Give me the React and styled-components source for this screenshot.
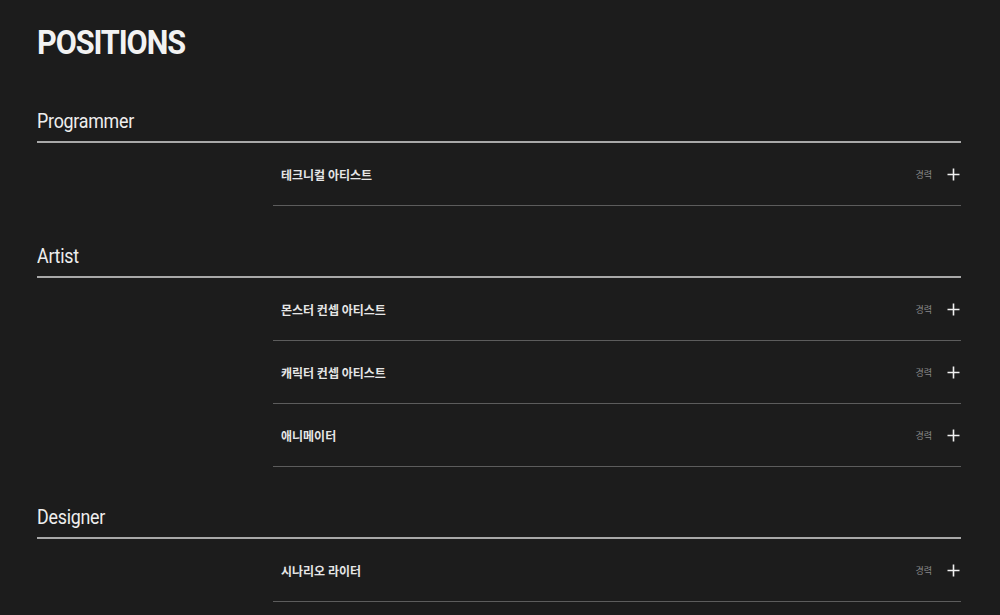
import React from "react";
import styled, { createGlobalStyle } from "styled-components";

const GlobalStyle = createGlobalStyle`
  html, body {
    margin: 0;
    padding: 0;
    background: #1c1c1c;
  }
  body {
    font-family: Roboto, "Noto Sans CJK KR", sans-serif;
    color: #f0f0f0;
  }
`;

const Page = styled.div`
  padding: 23px 39px 40px 37px;
`;

const Title = styled.h1`
  margin: 0 0 47px;
  font-size: 34px;
  font-weight: 700;
  letter-spacing: -1.2px;
  line-height: 38px;
  color: #f2f2f2;
  transform: scaleX(0.9);
  transform-origin: left center;
`;

const Section = styled.section`
  margin-bottom: 37px;
`;

const SectionHead = styled.h2`
  margin: 0;
  padding-bottom: 7px;
  font-size: 21px;
  font-weight: 400;
  line-height: 26px;
  color: #eeeeee;
  border-bottom: 2px solid #a8a8a8;
  letter-spacing: -0.3px;
`;

const HeadText = styled.span`
  display: inline-block;
  transform: scaleX(0.85);
  transform-origin: left center;
`;

const List = styled.ul`
  list-style: none;
  margin: 0 0 0 236px;
  padding: 0;
`;

const Row = styled.li`
  display: flex;
  align-items: center;
  height: 62px;
  padding: 0 1px 0 8px;
  border-bottom: 1px solid #5c5c5c;
`;

const Name = styled.span`
  flex: 1;
  font-family: "Noto Sans CJK KR", sans-serif;
  font-size: 12px;
  font-weight: 700;
  color: #e6e6e6;
`;

const Career = styled.span`
  font-family: "Noto Sans CJK KR", sans-serif;
  font-size: 9px;
  color: #8a8a8a;
  margin-right: 15px;
`;

const Plus = styled.svg`
  width: 13px;
  height: 13px;
  display: block;
`;

const groups = [
  { title: "Programmer", items: ["테크니컬 아티스트"] },
  { title: "Artist", items: ["몬스터 컨셉 아티스트", "캐릭터 컨셉 아티스트", "애니메이터"] },
  { title: "Designer", items: ["시나리오 라이터"] },
];

export default function App() {
  return (
    <Page>
      <GlobalStyle />
      <Title>POSITIONS</Title>
      {groups.map((g) => (
        <Section key={g.title}>
          <SectionHead>
            <HeadText>{g.title}</HeadText>
          </SectionHead>
          <List>
            {g.items.map((it) => (
              <Row key={it}>
                <Name>{it}</Name>
                <Career>경력</Career>
                <Plus viewBox="0 0 13 13">
                  <path d="M6.5 0.5v12M0.5 6.5h12" stroke="#f0f0f0" strokeWidth="1.6" fill="none" />
                </Plus>
              </Row>
            ))}
          </List>
        </Section>
      ))}
    </Page>
  );
}
